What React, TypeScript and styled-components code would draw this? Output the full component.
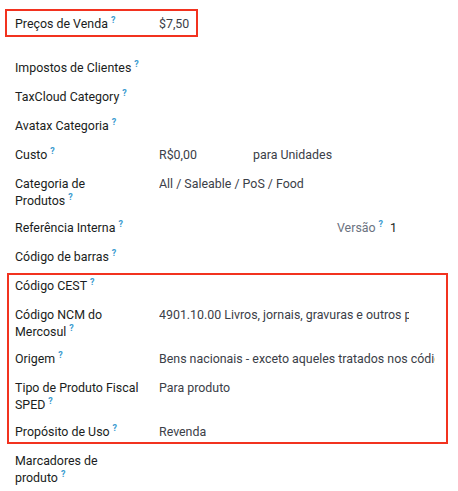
import React from "react";
import styled, { createGlobalStyle } from "styled-components";

const Global = createGlobalStyle`
  html, body { margin: 0; padding: 0; background: #ffffff; }
  body { font-family: Roboto, "Noto Sans", "Liberation Sans", sans-serif; }
`;

const Page = styled.div`
  width: 458px;
  box-sizing: border-box;
  padding: 9px 0 0 15px;
  display: flex;
  flex-direction: column;
`;

const Group = styled.div<{ $gapAfter?: number }>`
  display: flex;
  flex-direction: column;
  margin-bottom: ${(p) => p.$gapAfter ?? 0}px;
`;

const Highlight = styled.div<{ $t: number; $r: number; $b: number; $l: number }>`
  position: relative;
  display: flex;
  flex-direction: column;
  &::after {
    content: "";
    position: absolute;
    top: ${(p) => p.$t}px;
    right: ${(p) => p.$r}px;
    bottom: ${(p) => p.$b}px;
    left: ${(p) => p.$l}px;
    border: 2px solid #f2321f;
    pointer-events: none;
  }
`;

const Row = styled.div<{ $tall?: boolean }>`
  display: grid;
  grid-template-columns: 144px 1fr;
  min-height: ${(p) => (p.$tall ? 44 : 29)}px;
  font-size: 12.4px;
  line-height: 17px;
`;

const Label = styled.div`
  max-width: 124px;
  padding-top: 6px;
  color: #1a1d21;
  font-weight: 400;
`;

const Help = styled.sup`
  color: #3a9bd0;
  font-size: 9px;
  font-weight: 700;
  margin-left: 3px;
  vertical-align: 5px;
  line-height: 0;
`;

const Value = styled.div<{ $clip?: number }>`
  padding-top: 6px;
  color: #3b4048;
  white-space: nowrap;
  overflow: hidden;
  ${(p) => (p.$clip ? `width: ${p.$clip}px;` : "")}
  display: flex;
  align-items: flex-start;
`;

const Amount = styled.span`
  width: 94px;
`;

const Spacer = styled.span<{ $w: number }>`
  width: ${(p) => p.$w}px;
  flex: none;
`;

const SideLabel = styled.span`
  color: #6b7280;
  margin-right: 7px;
`;

const SideValue = styled.span`
  color: #1a1d21;
`;

function Field({
  label,
  tall,
  children,
  clip,
}: {
  label: string;
  tall?: boolean;
  children?: React.ReactNode;
  clip?: number;
}) {
  return (
    <Row $tall={tall}>
      <Label>
        {label}
        <Help>?</Help>
      </Label>
      <Value $clip={clip}>{children}</Value>
    </Row>
  );
}

export default function App() {
  return (
    <>
      <Global />
      <Page>
        <Group $gapAfter={15}>
          <Highlight $t={0} $r={260} $b={1} $l={-10}>
            <Field label="Preços de Venda">$7,50</Field>
          </Highlight>
        </Group>
        <Group>
          <Field label="Impostos de Clientes" />
          <Field label="TaxCloud Category" />
          <Field label="Avatax Categoria" />
          <Field label="Custo">
            <Amount>R$0,00</Amount>
            <span>para Unidades</span>
          </Field>
          <Field label="Categoria de Produtos" tall>
            All / Saleable / PoS / Food
          </Field>
          <Field label="Referência Interna">
            <Spacer $w={178} />
            <SideLabel>
              Versão<Help>?</Help>
            </SideLabel>
            <SideValue>1</SideValue>
          </Field>
          <Field label="Código de barras" />
        </Group>
        <Highlight $t={2} $r={10} $b={2} $l={-8}>
          <Field label="Código CEST" />
          <Field label="Código NCM do Mercosul" tall clip={250}>
            4901.10.00 Livros, jornais, gravuras e outros produtos
          </Field>
          <Field label="Origem" clip={276}>
            Bens nacionais - exceto aqueles tratados nos códigos 3, 4, 5 e 8
          </Field>
          <Field label="Tipo de Produto Fiscal SPED" tall>
            Para produto
          </Field>
          <Field label="Propósito de Uso">Revenda</Field>
        </Highlight>
        <Group>
          <Field label="Marcadores de produto" tall />
        </Group>
      </Page>
    </>
  );
}
